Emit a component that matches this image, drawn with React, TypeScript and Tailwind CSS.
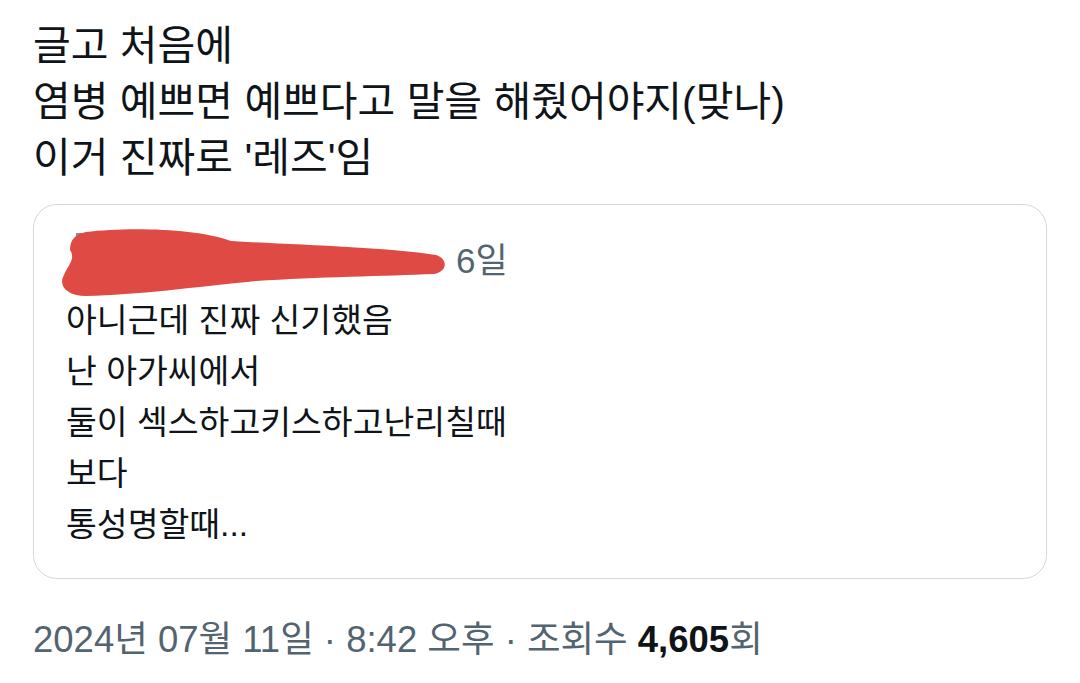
import React from 'react'

const font = { fontFamily: '"Liberation Sans", "Noto Sans CJK KR", sans-serif' }

const lines = ['글고 처음에', '염병 예쁘면 예쁘다고 말을 해줬어야지(맞나)', "이거 진짜로 '레즈'임"]
const quoted = ['아니근데 진짜 신기했음', '난 아가씨에서', '둘이 섹스하고키스하고난리칠때', '보다', '통성명할때...']

// redaction blob over the quoted author's name
function Scribble() {
  return (
    <svg width="395" height="72" viewBox="0 0 395 72" className="absolute left-[-10px] top-[-14px]">
      <path
        d="M30 5 C70 0 140 1 175 14 C240 18 330 20 380 28 C392 32 392 44 378 47 C330 49 260 50 200 54 C140 60 80 68 30 69 C10 69 2 58 8 48 C12 38 20 32 14 23 C14 12 20 7 30 5 Z"
        fill="#e04a44"
      />
    </svg>
  )
}

export default function App() {
  return (
    <div className="w-[1080px] h-[683px] bg-white text-[#0f1419] overflow-hidden" style={font}>
      <div className="px-[33px] pt-[18px]">
        <div className="text-[41px] leading-[56px]">
          {lines.map((l) => (
            <div key={l}>{l}</div>
          ))}
        </div>
        <div className="mt-[18px] h-[375px] rounded-[24px] border border-[#cfd9de] px-[32px] pt-[36px]">
          <div className="flex items-center h-[40px] text-[35px] text-[#536471]">
            <div className="relative w-[390px] h-[40px]">
              <div className="absolute left-[10px] top-[-8px] w-[7px] h-[12px] bg-[#7d93a3]" />
              <Scribble />
            </div>
            <span>6일</span>
          </div>
          <div className="mt-[14px] text-[33.5px] leading-[51px]">
            {quoted.map((l) => (
              <div key={l}>{l}</div>
            ))}
          </div>
        </div>
        <div className="mt-[34px] text-[36.5px] text-[#536471]">
          2024년 07월 11일 · 8:42 오후 · 조회수 <span className="font-bold text-[#0f1419]">4,605</span>회
        </div>
      </div>
    </div>
  )
}
